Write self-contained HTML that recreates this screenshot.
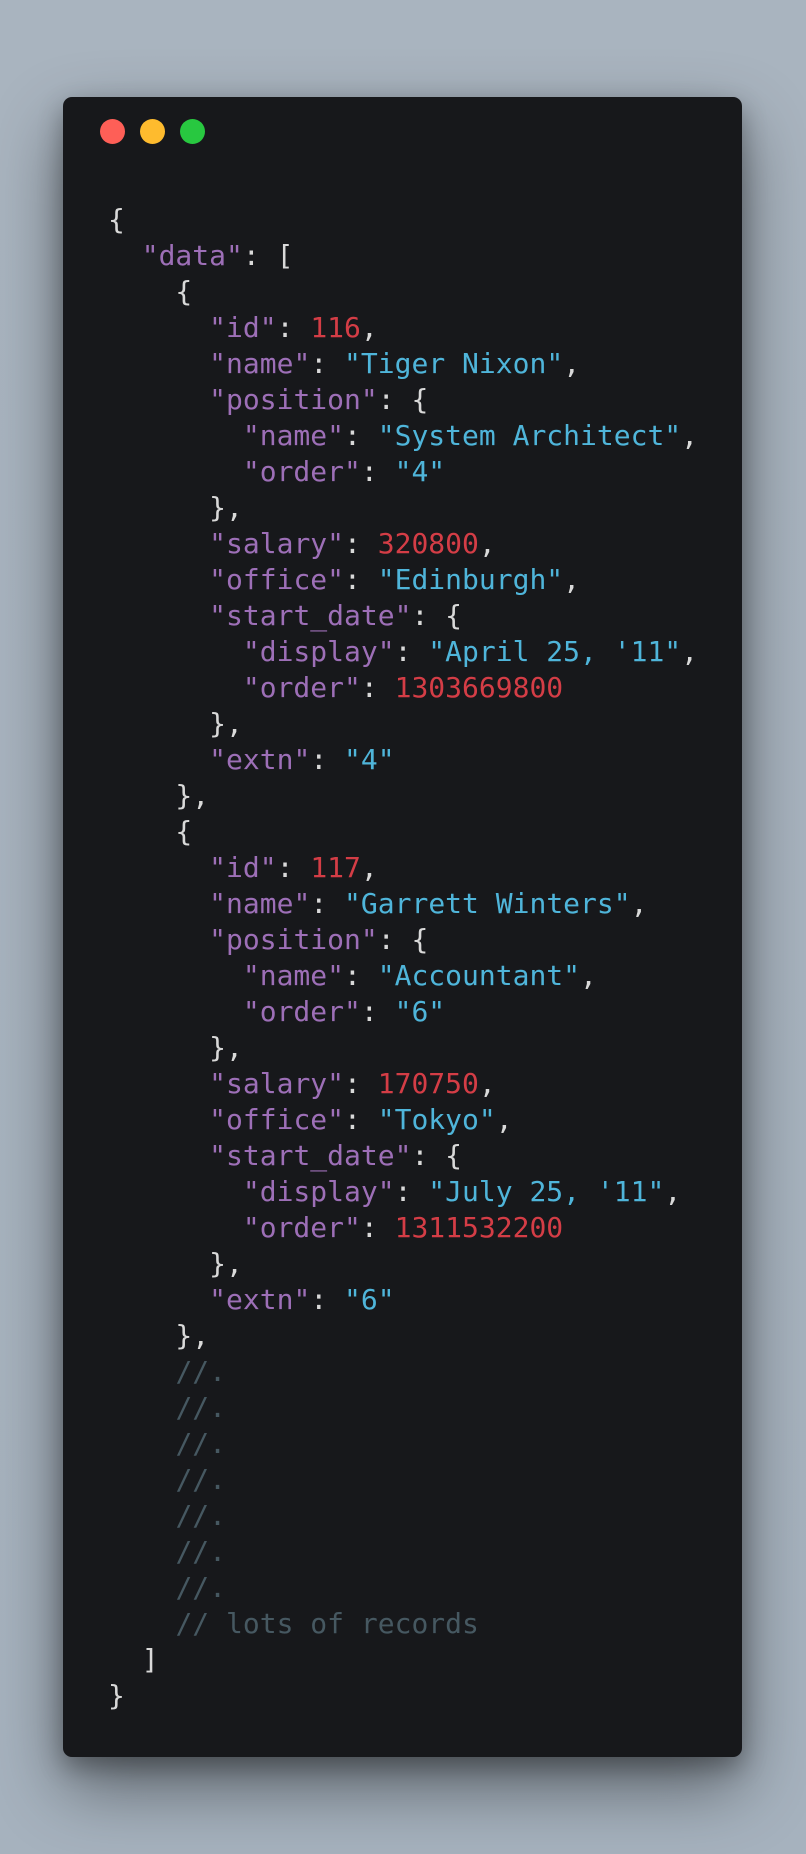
<!DOCTYPE html>
<html><head><meta charset="utf-8"><style>
html,body{margin:0;padding:0}
body{width:806px;height:1854px;background:linear-gradient(180deg,#a9b4bf 0%,#a6b2be 100%);position:relative;overflow:hidden}
.win{position:absolute;left:63px;top:97px;width:679px;height:1660px;background:#17181b;border-radius:9px;box-shadow:0 30px 70px rgba(0,0,0,0.45),0 10px 25px rgba(0,0,0,0.3)}
.dot{position:absolute;top:22px;width:25px;height:25px;border-radius:50%}
pre{position:absolute;left:45px;top:105px;margin:0;font-family:"DejaVu Sans Mono","Liberation Mono",monospace;font-size:28px;line-height:36px;color:#d9d9d9}
.k{color:#9d6fb7}.s{color:#4fb5da}.n{color:#d43d46}.c{color:#465861}
</style></head><body>
<div class="win">
<div class="dot" style="left:37px;background:#fe5f57"></div>
<div class="dot" style="left:77px;background:#febb2e"></div>
<div class="dot" style="left:117px;background:#28c840"></div>
<pre>{
  <span class="k">"data"</span>: [
    {
      <span class="k">"id"</span>: <span class="n">116</span>,
      <span class="k">"name"</span>: <span class="s">"Tiger Nixon"</span>,
      <span class="k">"position"</span>: {
        <span class="k">"name"</span>: <span class="s">"System Architect"</span>,
        <span class="k">"order"</span>: <span class="s">"4"</span>
      },
      <span class="k">"salary"</span>: <span class="n">320800</span>,
      <span class="k">"office"</span>: <span class="s">"Edinburgh"</span>,
      <span class="k">"start_date"</span>: {
        <span class="k">"display"</span>: <span class="s">"April 25, '11"</span>,
        <span class="k">"order"</span>: <span class="n">1303669800</span>
      },
      <span class="k">"extn"</span>: <span class="s">"4"</span>
    },
    {
      <span class="k">"id"</span>: <span class="n">117</span>,
      <span class="k">"name"</span>: <span class="s">"Garrett Winters"</span>,
      <span class="k">"position"</span>: {
        <span class="k">"name"</span>: <span class="s">"Accountant"</span>,
        <span class="k">"order"</span>: <span class="s">"6"</span>
      },
      <span class="k">"salary"</span>: <span class="n">170750</span>,
      <span class="k">"office"</span>: <span class="s">"Tokyo"</span>,
      <span class="k">"start_date"</span>: {
        <span class="k">"display"</span>: <span class="s">"July 25, '11"</span>,
        <span class="k">"order"</span>: <span class="n">1311532200</span>
      },
      <span class="k">"extn"</span>: <span class="s">"6"</span>
    },
    <span class="c">//.</span>
    <span class="c">//.</span>
    <span class="c">//.</span>
    <span class="c">//.</span>
    <span class="c">//.</span>
    <span class="c">//.</span>
    <span class="c">//.</span>
    <span class="c">// lots of records</span>
  ]
}</pre>
</div>
</body></html>
